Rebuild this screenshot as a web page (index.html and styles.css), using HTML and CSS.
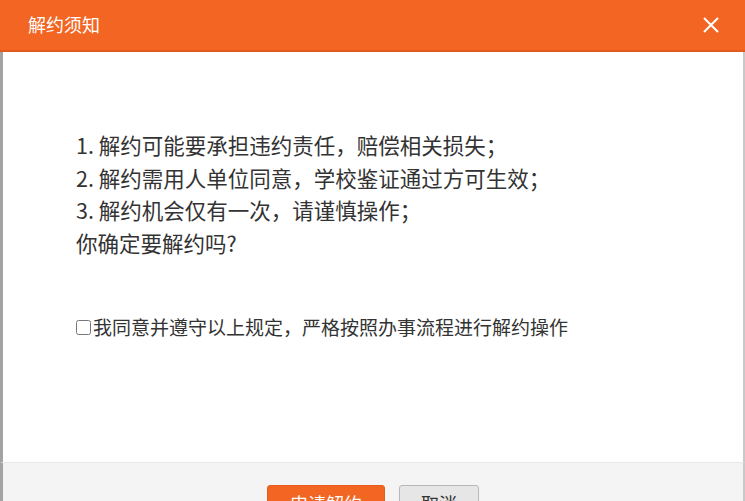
FILE: index.html
```html
<!DOCTYPE html>
<html lang="zh-CN">
<head>
    <meta charset="UTF-8"/>
    <meta name="viewport" content="width=device-width, initial-scale=1.0"/>
    <title>解约须知</title>
    <link rel="stylesheet" href="styles.css">
</head>
<body>
<div class="dialog">
    <div class="dialog-header">
        <span class="dialog-title">解约须知</span>
        <span class="dialog-close">
            <svg width="16" height="16" viewBox="0 0 16 16">
                <path d="M1 1 L15 15 M15 1 L1 15" stroke="#fff" stroke-width="2" fill="none"/>
            </svg>
        </span>
    </div>
    <div class="dialog-body">
        <div class="notice">
            <p>1. 解约可能要承担违约责任，赔偿相关损失；</p>
            <p>2. 解约需用人单位同意，学校鉴证通过方可生效；</p>
            <p>3. 解约机会仅有一次，请谨慎操作；</p>
            <p>你确定要解约吗?</p>
        </div>
        <label class="agree">
            <input type="checkbox" class="agree-box"/>
            <span>我同意并遵守以上规定，严格按照办事流程进行解约操作</span>
        </label>
    </div>
    <div class="dialog-footer">
        <button class="btn btn-primary">申请解约</button>
        <button class="btn btn-default">取消</button>
    </div>
</div>
</body>
</html>
```

FILE: styles.css
```css
* {
    margin: 0;
    padding: 0;
    box-sizing: border-box;
}

body {
    width: 745px;
    height: 501px;
    overflow: hidden;
    background-color: #fff;
    font-family: "Microsoft YaHei", "Noto Sans CJK SC", sans-serif;
}

.dialog {
    display: flex;
    flex-direction: column;
    height: 100%;
}

.dialog-header {
    height: 52px;
    display: flex;
    align-items: center;
    justify-content: space-between;
    padding: 0 26px 0 28px;
    background-color: #f26522;
    border-bottom: 2px solid #e25a1c;
    color: #fff;
}

.dialog-title {
    font-size: 18px;
    line-height: 24px;
    padding-bottom: 2px;
}

.dialog-close {
    display: flex;
}

.dialog-body {
    flex: 1;
    padding: 77px 0 0 73px;
    border-left: 3px solid #a3a3a3;
    border-right: 2px solid #c8c8c8;
    color: #333;
}

.notice p {
    font-size: 21.5px;
    line-height: 32.5px;
}

.agree {
    display: flex;
    align-items: center;
    margin-top: 54px;
    font-size: 19px;
    line-height: 28px;
}

.agree-box {
    width: 15px;
    height: 15px;
    margin: 0 2px 0 0;
}

.dialog-footer {
    height: 39px;
    display: flex;
    justify-content: center;
    align-items: flex-start;
    gap: 14px;
    padding-top: 22px;
    background-color: #f4f4f4;
    border-top: 1px solid #e8e8e8;
    border-left: 3px solid #a3a3a3;
    border-right: 2px solid #c8c8c8;
}

.btn {
    height: 36px;
    font-size: 18px;
    font-family: inherit;
    border-radius: 3px;
    flex-shrink: 0;
}

.btn-primary {
    width: 118px;
    background-color: #f26522;
    border: 1px solid #e85d1c;
    color: #fff;
}

.btn-default {
    width: 80px;
    background-color: #e6e6e6;
    border: 1px solid #b8b8b8;
    color: #333;
}
```
